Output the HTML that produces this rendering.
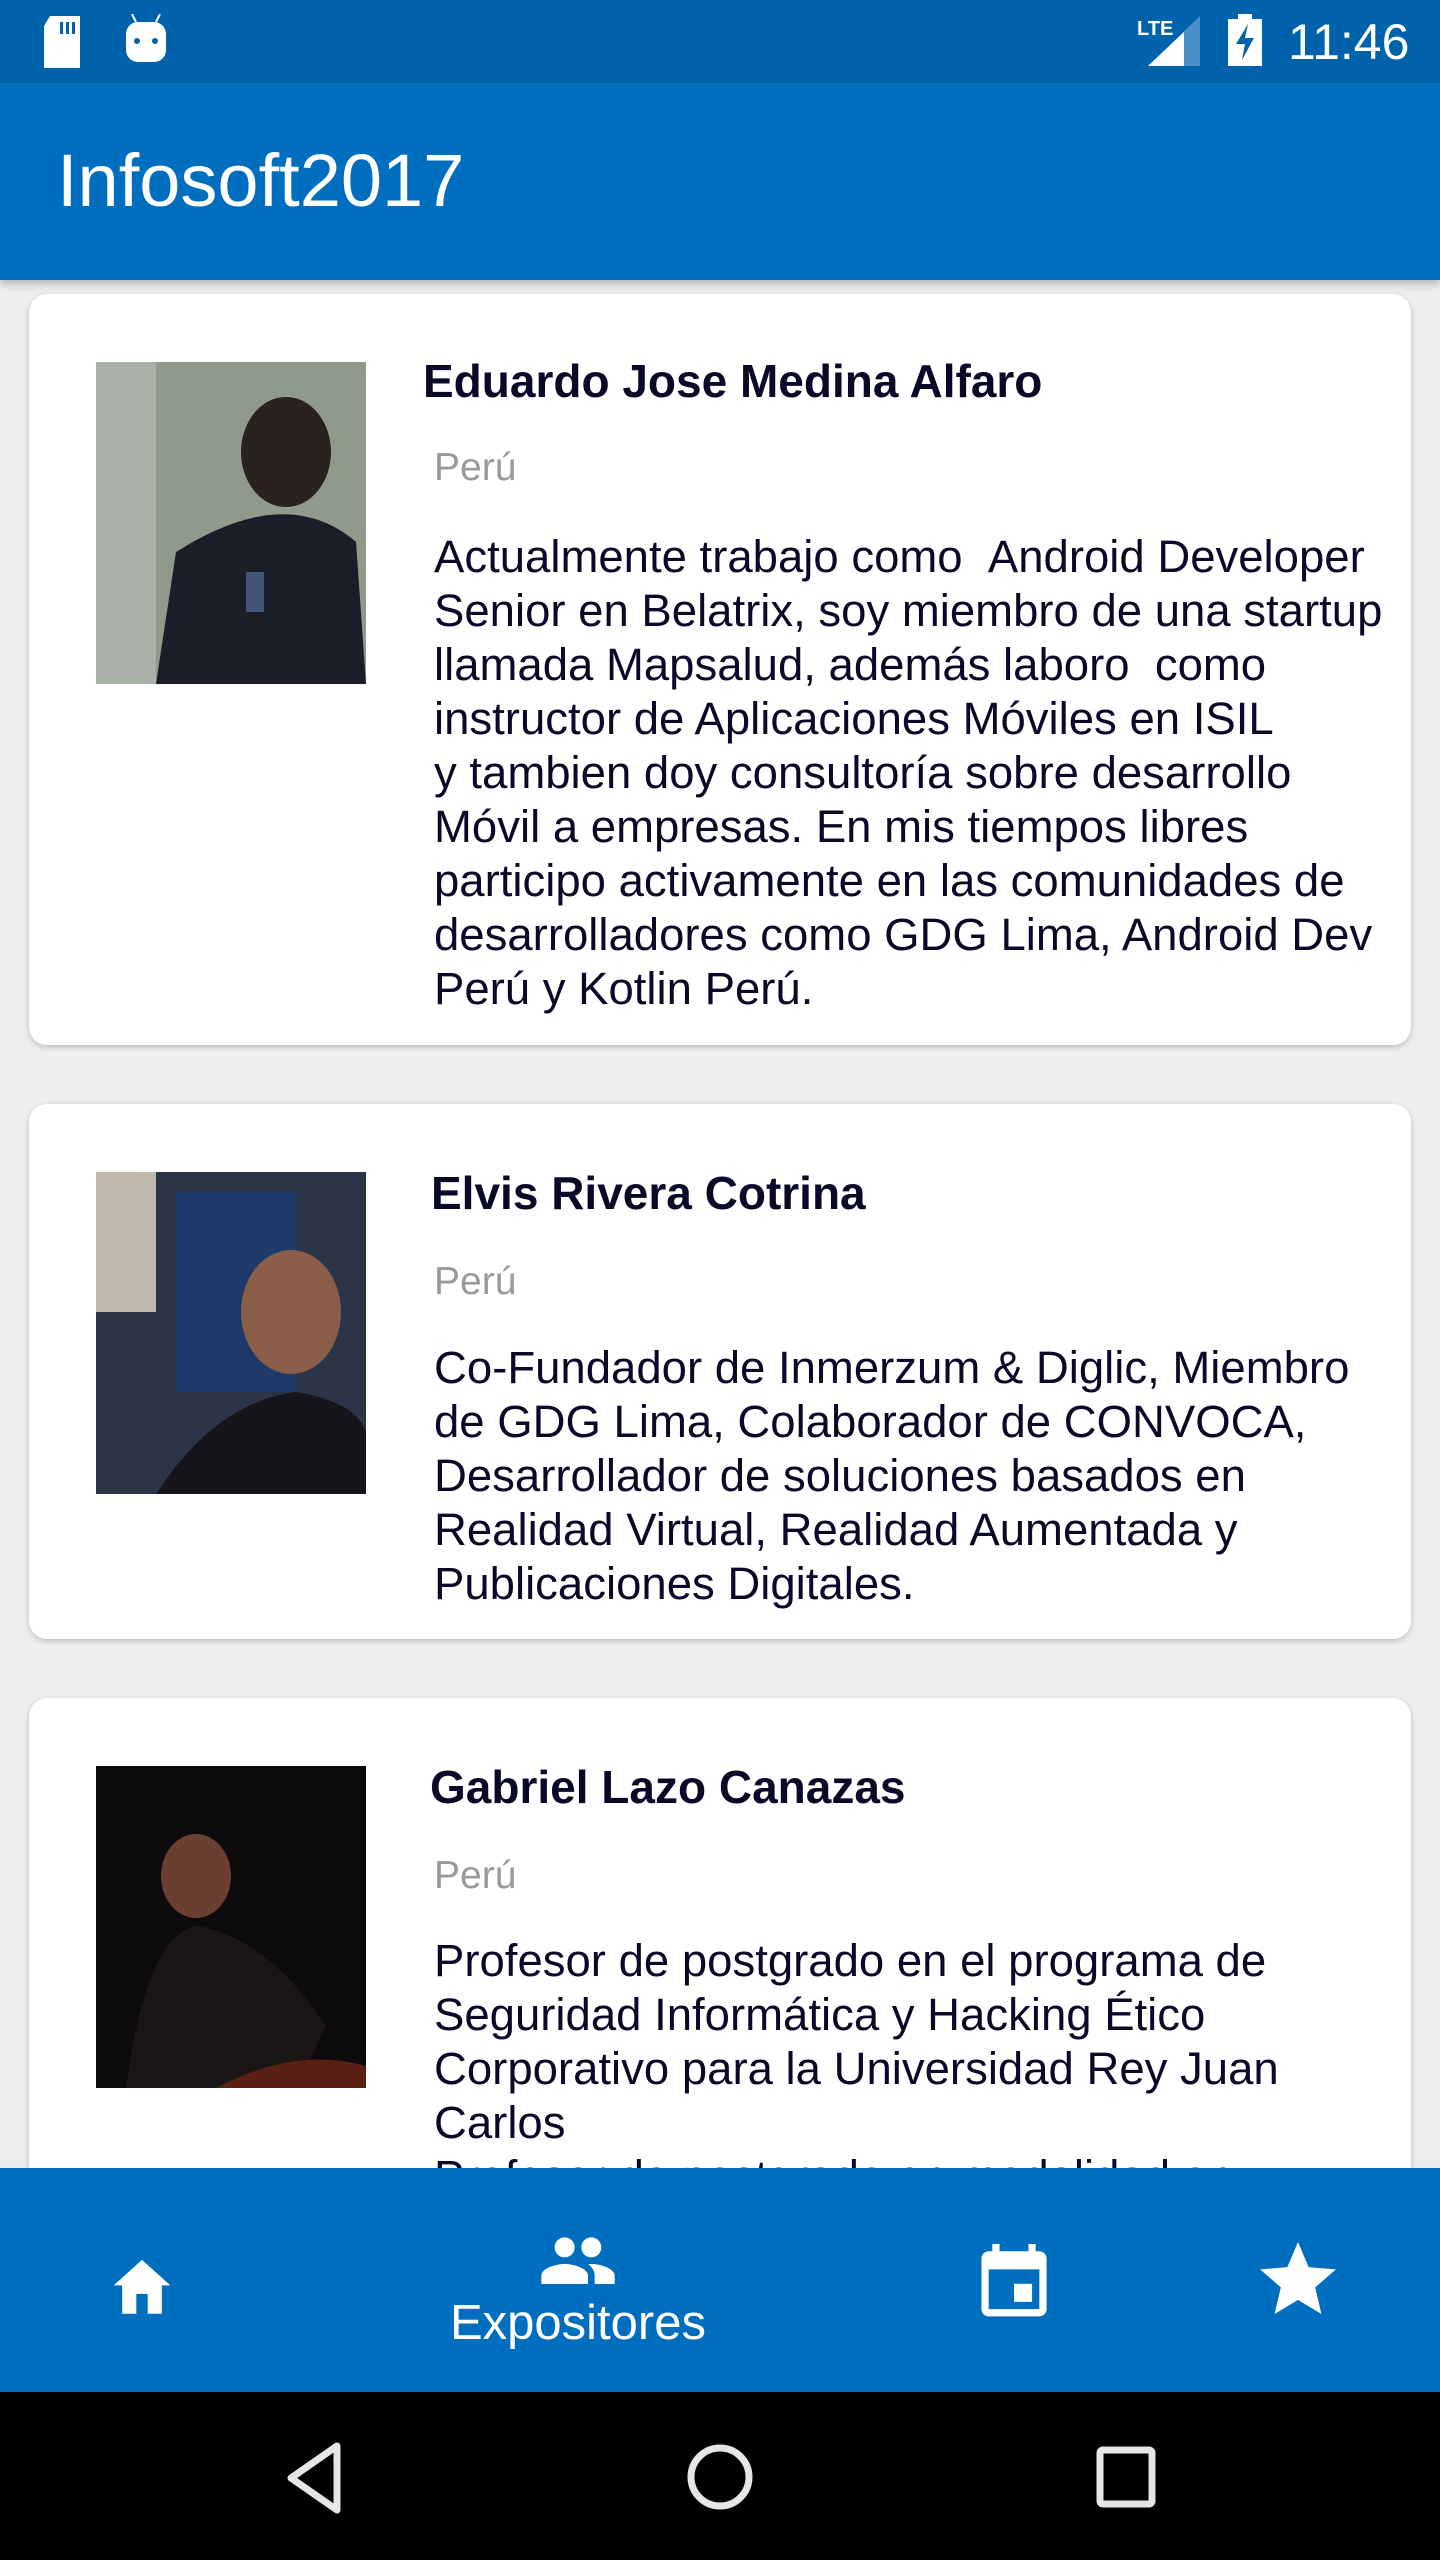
<!DOCTYPE html>
<html><head><meta charset="utf-8"><style>
*{margin:0;padding:0;box-sizing:border-box}
body{width:1440px;height:2560px;overflow:hidden;background:#eeeeee;font-family:"Liberation Sans",sans-serif;position:relative}
.abs{position:absolute}
.status{left:0;top:0;width:1440px;height:83px;background:#0062ab}
.appbar{left:0;top:83px;width:1440px;height:197px;background:#006ebf;box-shadow:0 4px 8px rgba(0,0,0,.25)}
.card{left:29px;width:1382px;background:#fff;border-radius:18px;box-shadow:0 2px 6px rgba(0,0,0,.22);overflow:hidden}
.photo{width:270px;height:322px}
.name{font-weight:bold;font-size:46px;color:#0a0a28;white-space:nowrap}
.country{font-size:39px;color:#999;white-space:nowrap}
.desc{font-size:45.5px;line-height:54px;color:#0a0a28;white-space:nowrap}
.bnav{left:0;top:2168px;width:1440px;height:224px;background:#006ebf}
.nav{left:0;top:2392px;width:1440px;height:168px;background:#000}
</style></head><body>
<div class="abs status">
<svg class="abs" style="left:40px;top:16px" width="44" height="52" viewBox="0 0 44 52"><path d="M10 0h30v52H4V10z" fill="#fff"/><rect x="20" y="6" width="3" height="12" fill="#0062ab"/><rect x="26" y="6" width="3" height="12" fill="#0062ab"/><rect x="32" y="6" width="3" height="12" fill="#0062ab"/></svg>
<svg class="abs" style="left:124px;top:14px" width="44" height="50" viewBox="0 0 44 50"><path d="M8 0l4 8M36 0l-4 8" stroke="#fff" stroke-width="2"/><rect x="2" y="8" width="40" height="40" rx="12" fill="#fff"/><circle cx="13" cy="27" r="3" fill="#0062ab"/><circle cx="31" cy="27" r="3" fill="#0062ab"/></svg>
<div class="abs" style="left:1137px;top:18px;color:#fff;font-size:20px;font-weight:bold">LTE</div>
<svg class="abs" style="left:1148px;top:16px" width="52" height="50" viewBox="0 0 52 50"><path d="M52 0V50H0z" fill="#4a8fc8"/><path d="M36 16V50H0z" fill="#fff"/></svg>
<svg class="abs" style="left:1228px;top:14px" width="34" height="52" viewBox="0 0 34 52"><path d="M10 0h14v5h10v47H0V5h10z" fill="#fff"/><path d="M20 10L8 30h9l-3 16 12-22h-9z" fill="#0062ab"/></svg>
<div class="abs" style="left:1288px;top:12px;color:#fff;font-size:50px;line-height:60px">11:46</div>
</div>
<div class="abs appbar"><div class="abs" style="left:57px;top:56px;color:#fff;font-size:74px;line-height:84px">Infosoft2017</div></div>

<div class="abs card" style="top:294px;height:751px">
<svg class="abs photo" style="left:67px;top:68px" viewBox="0 0 270 322"><rect width="270" height="322" fill="#8f9a8a"/><rect width="60" height="322" fill="#a8b0a8"/><ellipse cx="190" cy="90" rx="45" ry="55" fill="#2a221e"/><path d="M60 322 L80 190 Q190 120 260 180 L270 322z" fill="#1b1e28"/><rect x="150" y="210" width="18" height="40" fill="#445577"/></svg>
<div class="abs name" style="left:394px;top:60px">Eduardo Jose Medina Alfaro</div>
<div class="abs country" style="left:405px;top:152px">Perú</div>
<div class="abs desc" style="left:405px;top:236px">Actualmente trabajo como &nbsp;Android Developer<br>Senior en Belatrix, soy miembro de una startup<br>llamada Mapsalud, además laboro &nbsp;como<br>instructor de Aplicaciones Móviles en ISIL<br>y tambien doy consultoría sobre desarrollo<br>Móvil a empresas. En mis tiempos libres<br>participo activamente en las comunidades de<br>desarrolladores como GDG Lima, Android Dev<br>Perú y Kotlin Perú.</div>
</div>

<div class="abs card" style="top:1104px;height:535px">
<svg class="abs photo" style="left:67px;top:68px" viewBox="0 0 270 322"><rect width="270" height="322" fill="#2c3448"/><rect x="80" y="20" width="120" height="200" fill="#1e3a6a"/><rect x="0" y="0" width="60" height="140" fill="#bfb8aa"/><ellipse cx="195" cy="140" rx="50" ry="62" fill="#8a5e48"/><path d="M60 322 Q120 230 200 220 Q260 230 270 260 V322z" fill="#15151a"/></svg>
<div class="abs name" style="left:402px;top:62px">Elvis Rivera Cotrina</div>
<div class="abs country" style="left:405px;top:156px">Perú</div>
<div class="abs desc" style="left:405px;top:237px">Co-Fundador de Inmerzum &amp; Diglic, Miembro<br>de GDG Lima, Colaborador de CONVOCA,<br>Desarrollador de soluciones basados en<br>Realidad Virtual, Realidad Aumentada y<br>Publicaciones Digitales.</div>
</div>

<div class="abs card" style="top:1698px;height:600px">
<svg class="abs photo" style="left:67px;top:68px" viewBox="0 0 270 322"><rect width="270" height="322" fill="#0c0a0a"/><ellipse cx="100" cy="110" rx="35" ry="42" fill="#6a3e30"/><path d="M30 322 Q50 170 100 160 Q170 170 230 260 L200 322z" fill="#1a1616"/><path d="M120 322 Q200 280 270 300 V322z" fill="#5a2014"/></svg>
<div class="abs name" style="left:401px;top:62px">Gabriel Lazo Canazas</div>
<div class="abs country" style="left:405px;top:156px">Perú</div>
<div class="abs desc" style="left:405px;top:236px">Profesor de postgrado en el programa de<br>Seguridad Informática y Hacking Ético<br>Corporativo para la Universidad Rey Juan<br>Carlos<br>Profesor de postgrado en modalidad en</div>
</div>

<div class="abs bnav">
<svg class="abs" style="left:108px;top:86px" width="68" height="60" viewBox="0 0 24 21"><path d="M10 21v-7h4v7h5v-10h3L12 2 2 11h3v10z" fill="#fff"/></svg>
<svg class="abs" style="left:538px;top:56px" width="80" height="60" viewBox="0 2 24 16"><path d="M16 11c1.66 0 2.99-1.34 2.99-3S17.66 5 16 5s-3 1.34-3 3 1.34 3 3 3zm-8 0c1.660 0 2.99-1.34 2.99-3S9.66 5 8 5 5 6.34 5 8s1.34 3 3 3zm0 2c-2.33 0-7 1.17-7 3.5V19h14v-2.5c0-2.33-4.67-3.5-7-3.5zm8 0c-.29 0-.62.02-.97.05 1.16.84 1.97 1.970 1.97 3.45V19h6v-2.5c0-2.33-4.67-3.5-7-3.5z" fill="#fff"/></svg>
<div class="abs" style="left:430px;top:127px;width:296px;text-align:center;color:#fff;font-size:49px">Expositores</div>
<svg class="abs" style="left:978px;top:76px" width="72" height="76" viewBox="3 1 18 21"><path d="M17 12h-5v5h5v-5zM16 1v2H8V1H6v2H5c-1.11 0-1.99.9-1.99 2L3 19c0 1.1.89 2 2 2h14c1.1 0 2-.9 2-2V5c0-1.1-.9-2-2-2h-1V1h-2zm3 18H5V8h14v11z" fill="#fff"/></svg>
<svg class="abs" style="left:1260px;top:74px" width="76" height="72" viewBox="2 2 20 19"><path d="M12 17.27L18.18 21l-1.64-7.03L22 9.24l-7.19-.61L12 2 9.19 8.63 2 9.24l5.46 4.73L5.82 21z" fill="#fff"/></svg>
</div>

<div class="abs nav">
<svg class="abs" style="left:285px;top:50px" width="60" height="72" viewBox="0 0 60 72"><path d="M52 4 L6 36 L52 68z" fill="none" stroke="#e6e6e6" stroke-width="7" stroke-linejoin="round"/></svg>
<svg class="abs" style="left:686px;top:50px" width="68" height="70" viewBox="0 0 68 70"><circle cx="34" cy="35" r="29" fill="none" stroke="#e6e6e6" stroke-width="7"/></svg>
<svg class="abs" style="left:1096px;top:54px" width="60" height="62" viewBox="0 0 60 62"><rect x="4" y="4" width="52" height="54" rx="3" fill="none" stroke="#e6e6e6" stroke-width="7"/></svg>
</div>
</body></html>
